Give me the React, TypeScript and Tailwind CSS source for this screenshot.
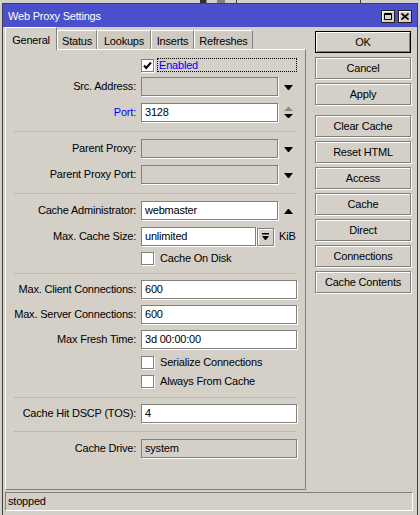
import type { ReactNode } from 'react';

const etched = 'border border-[#808080] shadow-[1px_1px_0_#fff]';

function Label({ children, blue }: { children: ReactNode; blue?: boolean }) {
  return (
    <div className={`w-[130px] shrink-0 text-right ${blue ? 'text-[#0000ff]' : 'text-black'}`}>
      {children}
    </div>
  );
}

function Field({ value, width, readOnly }: { value?: string; width: string; readOnly?: boolean }) {
  return (
    <div
      className={`ml-[5px] h-[19px] ${width} ${etched} flex items-center pl-[3px] ${
        readOnly ? 'bg-[#d4d0c8]' : 'bg-white'
      }`}
    >
      {value}
    </div>
  );
}

function DownArrow() {
  return (
    <svg width="9" height="5" viewBox="0 0 9 5" className="ml-[6px] mt-[2px]">
      <path d="M0 0h9l-4 5h-1z" fill="#000" />
    </svg>
  );
}

function UpArrow() {
  return (
    <svg width="9" height="5" viewBox="0 0 9 5" className="ml-[6px] mt-[1px]">
      <path d="M0 5h9l-4 -5h-1z" fill="#000" />
    </svg>
  );
}

function UpDownArrow() {
  return (
    <svg width="9" height="12" viewBox="0 0 9 12" className="ml-[6px] mt-[1px]">
      <path d="M0 4h9l-4 -4h-1z" fill="#8c8a84" />
      <path d="M0 7h9l-4 4h-1z" fill="#000" />
    </svg>
  );
}

function Checkbox({ checked }: { checked?: boolean }) {
  return (
    <div className="w-[13px] h-[13px] shrink-0 border border-[#808080] bg-white shadow-[1px_1px_0_#fff] flex items-center justify-center">
      {checked && (
        <svg width="9" height="9" viewBox="0 0 9 9">
          <path d="M1 4.5l2.2 2.5L8 1.5" fill="none" stroke="#000" strokeWidth="2" />
        </svg>
      )}
    </div>
  );
}

function Separator({ mt }: { mt: string }) {
  return <div className={`${mt} ml-[8px] w-[283px] border-t border-[#bcb8b0]`} />;
}

function Button({ children, primary, mt }: { children: ReactNode; primary?: boolean; mt?: string }) {
  return (
    <button
      className={`h-[22px] w-[96px] ${mt ?? ''} flex items-center justify-center bg-[#d4d0c8] text-black ${
        primary
          ? 'border border-black shadow-[inset_1px_1px_0_#fff,inset_-1px_-1px_0_#808080]'
          : 'border border-[#808080] shadow-[inset_1px_1px_0_#fff,1px_1px_0_#fff]'
      }`}
    >
      {children}
    </button>
  );
}

const tabs = [
  { name: 'Status', w: 'w-[40px]' },
  { name: 'Lookups', w: 'w-[54px]' },
  { name: 'Inserts', w: 'w-[43px]' },
  { name: 'Refreshes', w: 'w-[59px]' },
];

export default function App() {
  return (
    <div className="w-[420px] h-[515px] overflow-hidden bg-[#d4d0c8] font-['Liberation_Sans',Arial,sans-serif] text-[11px] tracking-[-0.2px] text-black">
      {/* window behind */}
      <div className="h-[3px] flex">
        <div className="w-[200px]" />
        <div className="w-[6px] bg-[#303030]" />
        <div className="w-[1px] bg-[#808080]" />
        <div className="w-[10px]" />
        <div className="w-[8px] bg-[#808080]" />
        <div className="w-[11px]" />
        <div className="w-[1px] bg-[#404040]" />
        <div className="w-[123px]" />
        <div className="w-[1px] bg-[#404040]" />
      </div>

      <div className="ml-[2px] w-[416px] h-[520px] border-t border-l border-r border-[#404040] bg-[#d4d0c8]">
        {/* title bar */}
        <div className="h-[23px] bg-[#4b4fcb] flex items-center pl-[5px] pr-[5px]">
          <span className="text-white pt-[1px]">Web Proxy Settings</span>
          <div className="ml-auto flex gap-[3px] mt-[2px]">
            <div className="w-[14px] h-[13px] bg-[#d4d0c8] border border-[#202020] shadow-[inset_1px_1px_0_#fff] flex items-center justify-center">
              <svg width="8" height="7" viewBox="0 0 8 7">
                <path d="M0.5 0.5h7v6h-7z" fill="none" stroke="#000" />
                <path d="M0 1.5h8" stroke="#000" />
              </svg>
            </div>
            <div className="w-[14px] h-[13px] bg-[#d4d0c8] border border-[#202020] shadow-[inset_1px_1px_0_#fff] flex items-center justify-center">
              <svg width="8" height="7" viewBox="0 0 8 7">
                <path d="M0.5 0.5l7 6M7.5 0.5l-7 6" stroke="#000" strokeWidth="1.6" />
              </svg>
            </div>
          </div>
        </div>

        <div className="pl-[2px] flex flex-col">
          <div className="h-[463px] flex">
            {/* tabs + panel */}
            <div className="w-[301px] flex flex-col">
              <div className="h-[22px] flex items-end">
                <div className="relative z-10 -mb-px h-[23px] w-[52px] bg-[#d4d0c8] border-t border-l border-r border-t-white border-l-white border-r-[#808080] flex items-start justify-center pt-[4px]">
                  General
                </div>
                {tabs.map((t) => (
                  <div
                    key={t.name}
                    className={`h-[19px] ${t.w} bg-[#cfcbc3] border-t border-l border-r border-t-white border-l-white border-r-[#808080] flex items-center justify-center pt-[2px]`}
                  >
                    {t.name}
                  </div>
                ))}
              </div>

              <div className="h-[441px] border-t border-l border-r border-b border-t-white border-l-white border-r-[#808080] border-b-[#808080] flex flex-col">
                {/* Enabled */}
                <div className="mt-[8px] h-[14px] flex items-center pl-[135px]">
                  <Checkbox checked />
                  <div className="ml-[3px] h-[14px] w-[140px] border border-dotted border-black flex items-center pl-[1px] text-[#0000ff]">
                    Enabled
                  </div>
                </div>

                <div className="mt-[5px] h-[19px] flex items-center">
                  <Label>Src. Address:</Label>
                  <Field width="w-[137px]" readOnly />
                  <DownArrow />
                </div>
                <div className="mt-[7px] h-[19px] flex items-center">
                  <Label blue>Port:</Label>
                  <Field width="w-[137px]" value="3128" />
                  <UpDownArrow />
                </div>

                <Separator mt="mt-[9px]" />

                <div className="mt-[7px] h-[19px] flex items-center">
                  <Label>Parent Proxy:</Label>
                  <Field width="w-[137px]" readOnly />
                  <DownArrow />
                </div>
                <div className="mt-[7px] h-[19px] flex items-center">
                  <Label>Parent Proxy Port:</Label>
                  <Field width="w-[137px]" readOnly />
                  <DownArrow />
                </div>

                <Separator mt="mt-[9px]" />

                <div className="mt-[7px] h-[19px] flex items-center">
                  <Label>Cache Administrator:</Label>
                  <Field width="w-[137px]" value="webmaster" />
                  <UpArrow />
                </div>
                <div className="mt-[7px] h-[19px] flex items-center">
                  <Label>Max. Cache Size:</Label>
                  <Field width="w-[115px]" value="unlimited" />
                  <div className="ml-[1px] w-[17px] h-[18px] border border-[#808080] shadow-[inset_1px_1px_0_#fff,1px_1px_0_#fff] flex items-center justify-center">
                    <svg width="7" height="7" viewBox="0 0 7 7">
                      <path d="M0 0h7v1.5h-7z" fill="#000" />
                      <path d="M0 3h7l-3 4h-1z" fill="#000" />
                    </svg>
                  </div>
                  <span className="ml-[5px]">KiB</span>
                </div>
                <div className="mt-[6px] h-[13px] flex items-center pl-[135px]">
                  <Checkbox />
                  <span className="ml-[6px]">Cache On Disk</span>
                </div>

                <Separator mt="mt-[8px]" />

                <div className="mt-[6px] h-[19px] flex items-center">
                  <Label>Max. Client Connections:</Label>
                  <Field width="w-[156px]" value="600" />
                </div>
                <div className="mt-[6px] h-[19px] flex items-center">
                  <Label>Max. Server Connections:</Label>
                  <Field width="w-[156px]" value="600" />
                </div>
                <div className="mt-[6px] h-[19px] flex items-center">
                  <Label>Max Fresh Time:</Label>
                  <Field width="w-[156px]" value="3d 00:00:00" />
                </div>
                <div className="mt-[7px] h-[13px] flex items-center pl-[135px]">
                  <Checkbox />
                  <span className="ml-[6px]">Serialize Connections</span>
                </div>
                <div className="mt-[6px] h-[13px] flex items-center pl-[135px]">
                  <Checkbox />
                  <span className="ml-[6px]">Always From Cache</span>
                </div>

                <Separator mt="mt-[9px]" />

                <div className="mt-[6px] h-[19px] flex items-center">
                  <Label>Cache Hit DSCP (TOS):</Label>
                  <Field width="w-[156px]" value="4" />
                </div>

                <Separator mt="mt-[8px]" />

                <div className="mt-[7px] h-[19px] flex items-center">
                  <Label>Cache Drive:</Label>
                  <Field width="w-[156px]" value="system" readOnly />
                </div>
              </div>
            </div>

            {/* buttons */}
            <div className="ml-[9px] pt-[4px] flex flex-col gap-[4px]">
              <Button primary>OK</Button>
              <Button>Cancel</Button>
              <Button>Apply</Button>
              <Button mt="mt-[6px]">Clear Cache</Button>
              <Button>Reset HTML</Button>
              <Button>Access</Button>
              <Button>Cache</Button>
              <Button>Direct</Button>
              <Button>Connections</Button>
              <Button>Cache Contents</Button>
            </div>
          </div>

          {/* status bar */}
          <div className="mt-[2px] w-[408px] h-[19px] border-t border-l border-r border-b border-t-[#808080] border-l-[#808080] border-r-white border-b-white flex items-center pl-[2px]">
            stopped
          </div>
        </div>
      </div>
    </div>
  );
}
